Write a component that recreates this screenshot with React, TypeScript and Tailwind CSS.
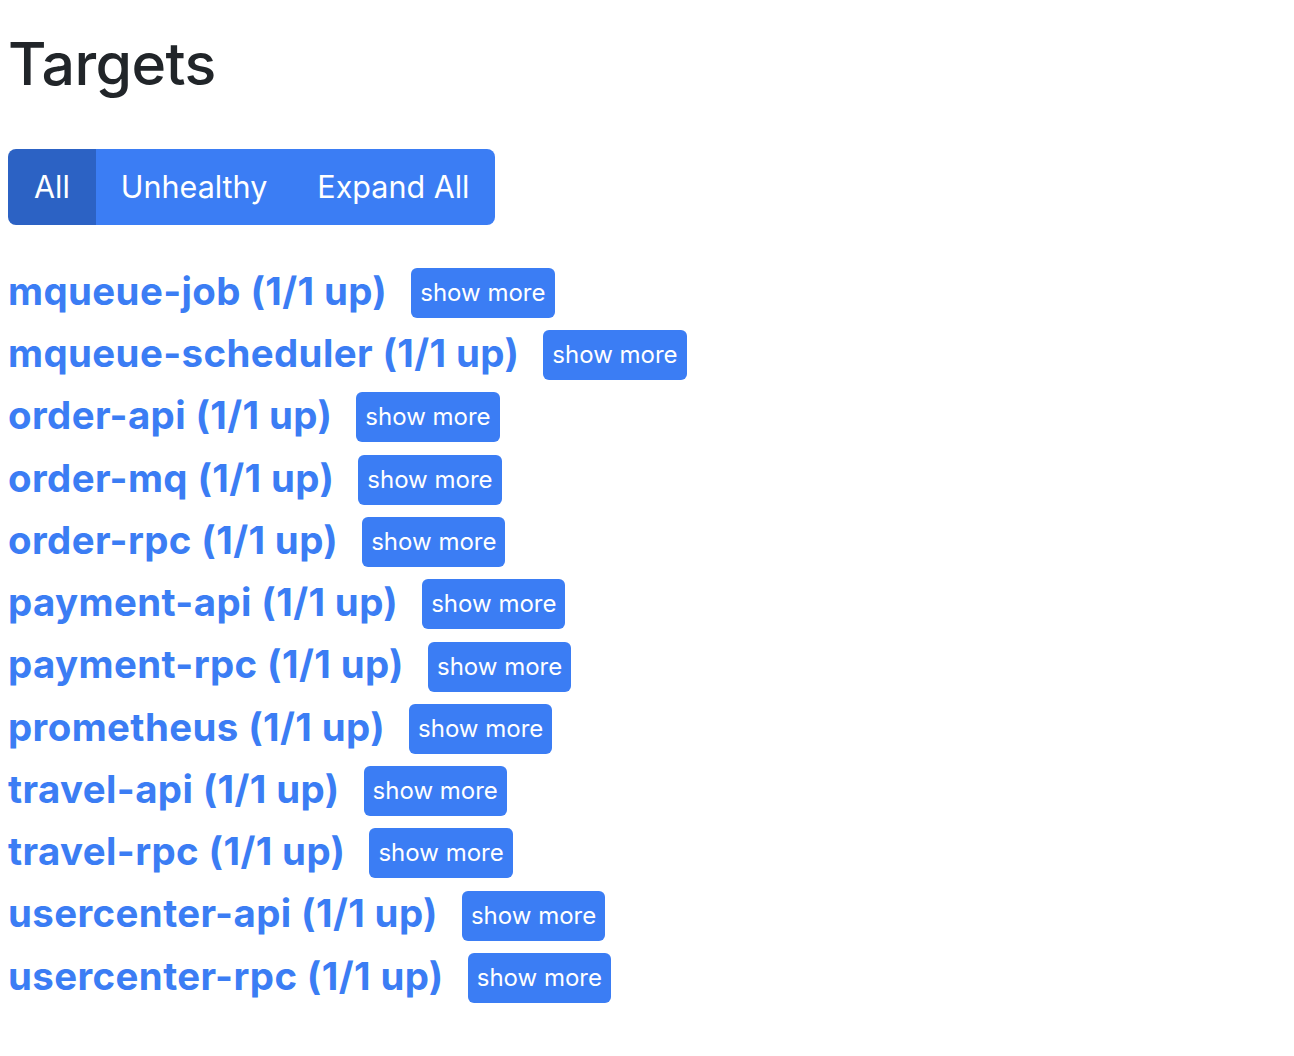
const jobs = [
  "mqueue-job",
  "mqueue-scheduler",
  "order-api",
  "order-mq",
  "order-rpc",
  "payment-api",
  "payment-rpc",
  "prometheus",
  "travel-api",
  "travel-rpc",
  "usercenter-api",
  "usercenter-rpc",
];

export default function App() {
  return (
    <div className="min-h-screen bg-white px-2 text-[#212529] font-['Inter',sans-serif]">
      <h1 className="pt-[29px] text-[59px] font-medium leading-[1.2] tracking-[-0.6px]">Targets</h1>

      <div className="mt-[49px] inline-flex h-[76px] overflow-hidden rounded-lg text-[30.5px] text-white">
        <button className="bg-[#2c62c4] px-[26px]">All</button>
        <button className="bg-[#3b7df4] px-[25px]">Unhealthy</button>
        <button className="bg-[#3b7df4] px-[25px]">Expand All</button>
      </div>

      <div className="mt-[35px] flex flex-col">
        {jobs.map((job) => (
          <div key={job} className="flex h-[62.27px] items-center gap-6">
            <a href="#" className="text-[38.4px] font-bold leading-none tracking-[0.4px] text-[#3b7df4]">
              {job} (1/1 up)
            </a>
            <button className="mt-[4px] h-[50px] rounded-md bg-[#3b7df4] px-[9px] text-[24px] text-white">
              show more
            </button>
          </div>
        ))}
      </div>
    </div>
  );
}
